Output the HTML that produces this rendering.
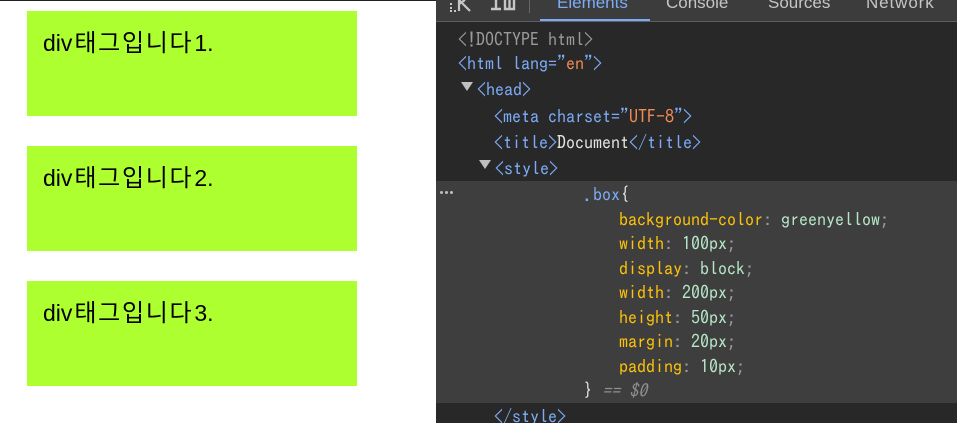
<!DOCTYPE html>
<html lang="ko"><head><meta charset="UTF-8"><title>Document</title>
<style>
html,body{margin:0;padding:0;background:#fff;width:957px;height:423px;overflow:hidden}
body{position:relative}
.topline{position:absolute;left:0;top:0;width:436px;height:1px;background:#202124}
.box{position:absolute;left:27px;width:330px;height:105px;background:#adff2f;color:#000;font:23px/30px "Liberation Sans","Noto Sans CJK KR",sans-serif}
.box span{position:absolute;left:16px;top:17px;white-space:nowrap}
.box span b{font-weight:400;font-size:24px;letter-spacing:1.7px;margin-left:2px;margin-right:1px}
.dev{position:absolute;left:436px;top:0;width:521px;height:423px;background:#282828;overflow:hidden}
.tabs{position:absolute;left:0;top:0;width:521px;height:21px;background:#3c3c3c;border-bottom:1px solid #5e5e5e;overflow:hidden}
.tab{position:absolute;top:-8px;font:17px/22px "Liberation Sans","Noto Sans CJK KR",sans-serif;color:#c4c7c5;white-space:nowrap}
.ul{position:absolute;left:104px;top:19px;width:110px;height:3px;background:#7cacf8}
.sep{position:absolute;left:93px;top:0;width:1px;height:13px;background:#666}
.sel{position:absolute;left:0;top:181px;width:521px;height:222px;background:#3e3e3e}
.l{position:absolute;margin-top:1px;font:18px/20px "IPAGothic","Liberation Mono",monospace;white-space:pre;color:#e3e3e3}
.t{color:#7cacf8}.a{color:#7cacf8}.v{color:#f28b54}.g{color:#9a9a9a}.p{color:#fdc20a}.c{color:#b6e6c8}.w{color:#e3e3e3}
.i{color:#8f8f8f;font-style:italic}
.tri{position:absolute;width:0;height:0;border-left:6px solid transparent;border-right:6px solid transparent;border-top:9px solid #c0c0c0}
.d{position:absolute;top:191px;width:3px;height:3px;border-radius:50%;background:#bdbdbd}
</style></head><body>
<div class="topline"></div>
<div class="box" style="top:11px"><span>div<b>태그입니다</b>1.</span></div>
<div class="box" style="top:146px"><span>div<b>태그입니다</b>2.</span></div>
<div class="box" style="top:281px"><span>div<b>태그입니다</b>3.</span></div>
<div class="dev">
<div class="tabs">
<svg style="position:absolute;left:12px;top:0" width="26" height="14" viewBox="0 0 26 14"><g fill="#c4c7c5"><rect x="2" y="3" width="2" height="2"/><rect x="2" y="7" width="2" height="2"/><rect x="2" y="10" width="2" height="2"/><rect x="6" y="10" width="2" height="2"/></g><path d="M11 0V11M11 0L22 11M11 4L17 0" stroke="#c4c7c5" stroke-width="2.2" fill="none"/></svg>
<svg style="position:absolute;left:54px;top:0" width="26" height="12" viewBox="0 0 26 12"><path d="M1 9H11M6 0V9M15 0V9H24V0M19.500 0V9" stroke="#c4c7c5" stroke-width="2.4" fill="none"/></svg>
<div class="sep"></div>
<div class="tab" style="left:121px;color:#7cacf8">Elements</div>
<div class="tab" style="left:230px">Console</div>
<div class="tab" style="left:332px">Sources</div>
<div class="tab" style="left:430px;letter-spacing:.9px">Network</div>
<div class="ul"></div>
</div>
<div class="sel"></div>
<div class="d" style="left:4px"></div><div class="d" style="left:9px"></div><div class="d" style="left:14px"></div>
<div class="tri" style="left:25px;top:82px"></div>
<div class="tri" style="left:43px;top:160px"></div>
<div class="l g" style="left:22px;top:29px">&lt;!DOCTYPE html&gt;</div>
<div class="l t" style="left:22px;top:53px">&lt;html lang="<span class="v">en</span>"&gt;</div>
<div class="l t" style="left:41px;top:79px">&lt;head&gt;</div>
<div class="l t" style="left:58px;top:106px">&lt;meta charset="<span class="v">UTF-8</span>"&gt;</div>
<div class="l t" style="left:58px;top:132px">&lt;title&gt;<span class="w">Document</span>&lt;/title&gt;</div>
<div class="l t" style="left:59px;top:158px">&lt;style&gt;</div>
<div class="l w" style="left:148px;top:184px"><span class="t">.box</span>{</div>
<div class="l" style="left:183px;top:209px"><span class="p">background-color</span><span class="g">:</span> <span class="c">greenyellow</span><span class="g">;</span></div>
<div class="l" style="left:183px;top:233px"><span class="p">width</span><span class="g">:</span> <span class="c">100px</span><span class="g">;</span></div>
<div class="l" style="left:183px;top:258px"><span class="p">display</span><span class="g">:</span> <span class="c">block</span><span class="g">;</span></div>
<div class="l" style="left:183px;top:282px"><span class="p">width</span><span class="g">:</span> <span class="c">200px</span><span class="g">;</span></div>
<div class="l" style="left:183px;top:307px"><span class="p">height</span><span class="g">:</span> <span class="c">50px</span><span class="g">;</span></div>
<div class="l" style="left:183px;top:331px"><span class="p">margin</span><span class="g">:</span> <span class="c">20px</span><span class="g">;</span></div>
<div class="l" style="left:183px;top:356px"><span class="p">padding</span><span class="g">:</span> <span class="c">10px</span><span class="g">;</span></div>
<div class="l w" style="left:148px;top:380px">} <span class="i">== $0</span></div>
<div class="l t" style="left:58px;top:406px">&lt;/style&gt;</div>
</div>
</body></html>
